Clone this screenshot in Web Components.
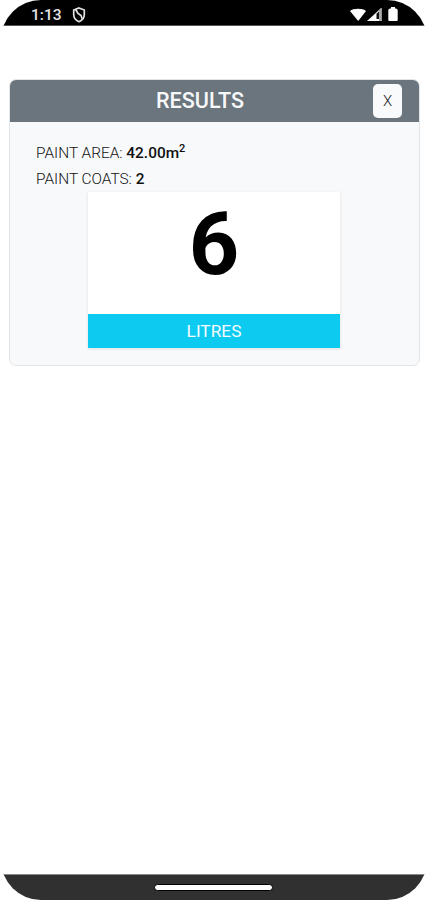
<!DOCTYPE html>
<html lang="en"><head><meta charset="utf-8"><title>Results</title>
<style>html,body{margin:0;height:100%;background:#fff;overflow:hidden}body{font-family:Roboto,sans-serif}</style></head>
<body>
<phone-screen>
<status-bar slot="top">1:13</status-bar>
<results-card heading="RESULTS">
<paint-fact label="PAINT AREA:">42.00m<sup style="font-size:11px;line-height:0;vertical-align:6px">2</sup></paint-fact>
<paint-fact label="PAINT COATS:">2</paint-fact>
<volume-tile unit="LITRES">6</volume-tile>
</results-card>
<nav-bar slot="bottom"></nav-bar>
</phone-screen>
<script>
const define=(name,html)=>customElements.define(name,class extends HTMLElement{
  constructor(){
    super();
    const t=document.createElement('template');
    t.innerHTML=html;
    this.attachShadow({mode:'open'}).append(t.content.cloneNode(true));
  }
  connectedCallback(){
    this.shadowRoot.querySelectorAll('[data-attr]').forEach(e=>e.textContent=this.getAttribute(e.dataset.attr));
  }
});
define('phone-screen',`<style>
:host{display:flex;flex-direction:column;box-sizing:border-box;height:900px;width:426px;margin-left:1px;border-radius:40px;overflow:hidden;background:#fff}
main{flex:1;padding:53px 7px 0 8px}
</style><slot name="top"></slot><main><slot></slot></main><slot name="bottom"></slot>`);
define('status-bar',`<style>
:host{display:flex;align-items:center;box-sizing:border-box;height:26px;padding:4px 28px 0 30px;background:#000;border-bottom:1px solid #555;color:#e4e4e4;font-size:15.5px;font-weight:500;line-height:22px}
.time{width:30px;white-space:nowrap}
svg{display:block}
.shield{margin-left:11px}.icons{margin-left:auto}
</style><span class="time"><slot></slot></span>
<svg class="shield" width="14" height="16" viewBox="0 0 14 16" fill="none" stroke="#e4e4e4" stroke-width="1.7"><path d="M7 1 12.3 3V7.5C12.3 11 10.2 13.4 7 14.7 3.800 13.4 1.700 11 1.700 7.500V3Z"/><path d="M3.700 2.500 6 6.500 9 8.500 10.500 12.500"/></svg>
<svg class="icons" width="49" height="16" viewBox="0 0 49 16"><path fill="#fff" d="M0 4C3 .9 13 .9 16 4L8.200 14Z"/><path fill="#fff" d="M17 14 31.500.7V14Z"/><path fill="#111" d="M26.500 6.800 29 4.500V12H26.500Z"/><path fill="#aaa" d="M29 3 31.500.7V14H29Z"/><path fill="#fff" d="M41 0h4v1.500h1.200q1.500.5 1.500 1.700V13q0 1-1 1h-7.400q-1 0-1-1V3.200q0-1.200 1.500-1.700H41Z"/></svg>`);
define('results-card',`<style>
:host{display:block;box-sizing:border-box;height:287px;border:1px solid #e2e5e7;border-radius:7px;background:#f8f9fb;overflow:hidden}
header{display:grid;grid-template-columns:46px 1fr 46px;align-items:center;height:43px;margin:-1px -1px 0;background:#6b757d}
h1{grid-column:2;margin:0;text-align:center;font-size:21.600px;font-weight:500;line-height:41px;color:#f6f8fa;transform:translate(-14.500px,-.5px)}
button{justify-self:end;margin-right:18px;width:29px;height:34px;padding:0;border:0;border-radius:5px;background:#f9fafb;color:#222;font:300 15px/34px Roboto,sans-serif}
section{padding:18px 26px 0;font-size:15.400px;color:#111}
</style><header><h1 data-attr="heading"></h1><button>X</button></header><section><slot></slot></section>`);
define('paint-fact',`<style>
:host{display:block;height:26px;line-height:26px;white-space:nowrap}
span{font-weight:300}b{font-weight:500}
</style><span data-attr="label"></span> <b><slot></slot></b>`);
define('volume-tile',`<style>
:host{display:flex;flex-direction:column;width:252px;height:156px;margin-left:52px;background:#fff;box-shadow:0 1px 3px #0000001c}
strong{flex:1;text-align:center;font-size:88px;line-height:103px;font-weight:700;color:#000}
footer{height:34px;line-height:34px;text-align:center;background:#0dcaf0;color:#f5fcff;font-size:17.300px}
</style><strong><slot></slot></strong><footer data-attr="unit"></footer>`);
define('nav-bar',`<style>
:host{display:flex;justify-content:center;align-items:center;box-sizing:border-box;height:26px;border-top:1px solid #888;background:#303030}
i{display:block;width:117px;height:5px;margin:0 1px 0 0;border:1px solid #000;border-radius:4px;background:#fff}
</style><i></i>`);
</script>
</body></html>
